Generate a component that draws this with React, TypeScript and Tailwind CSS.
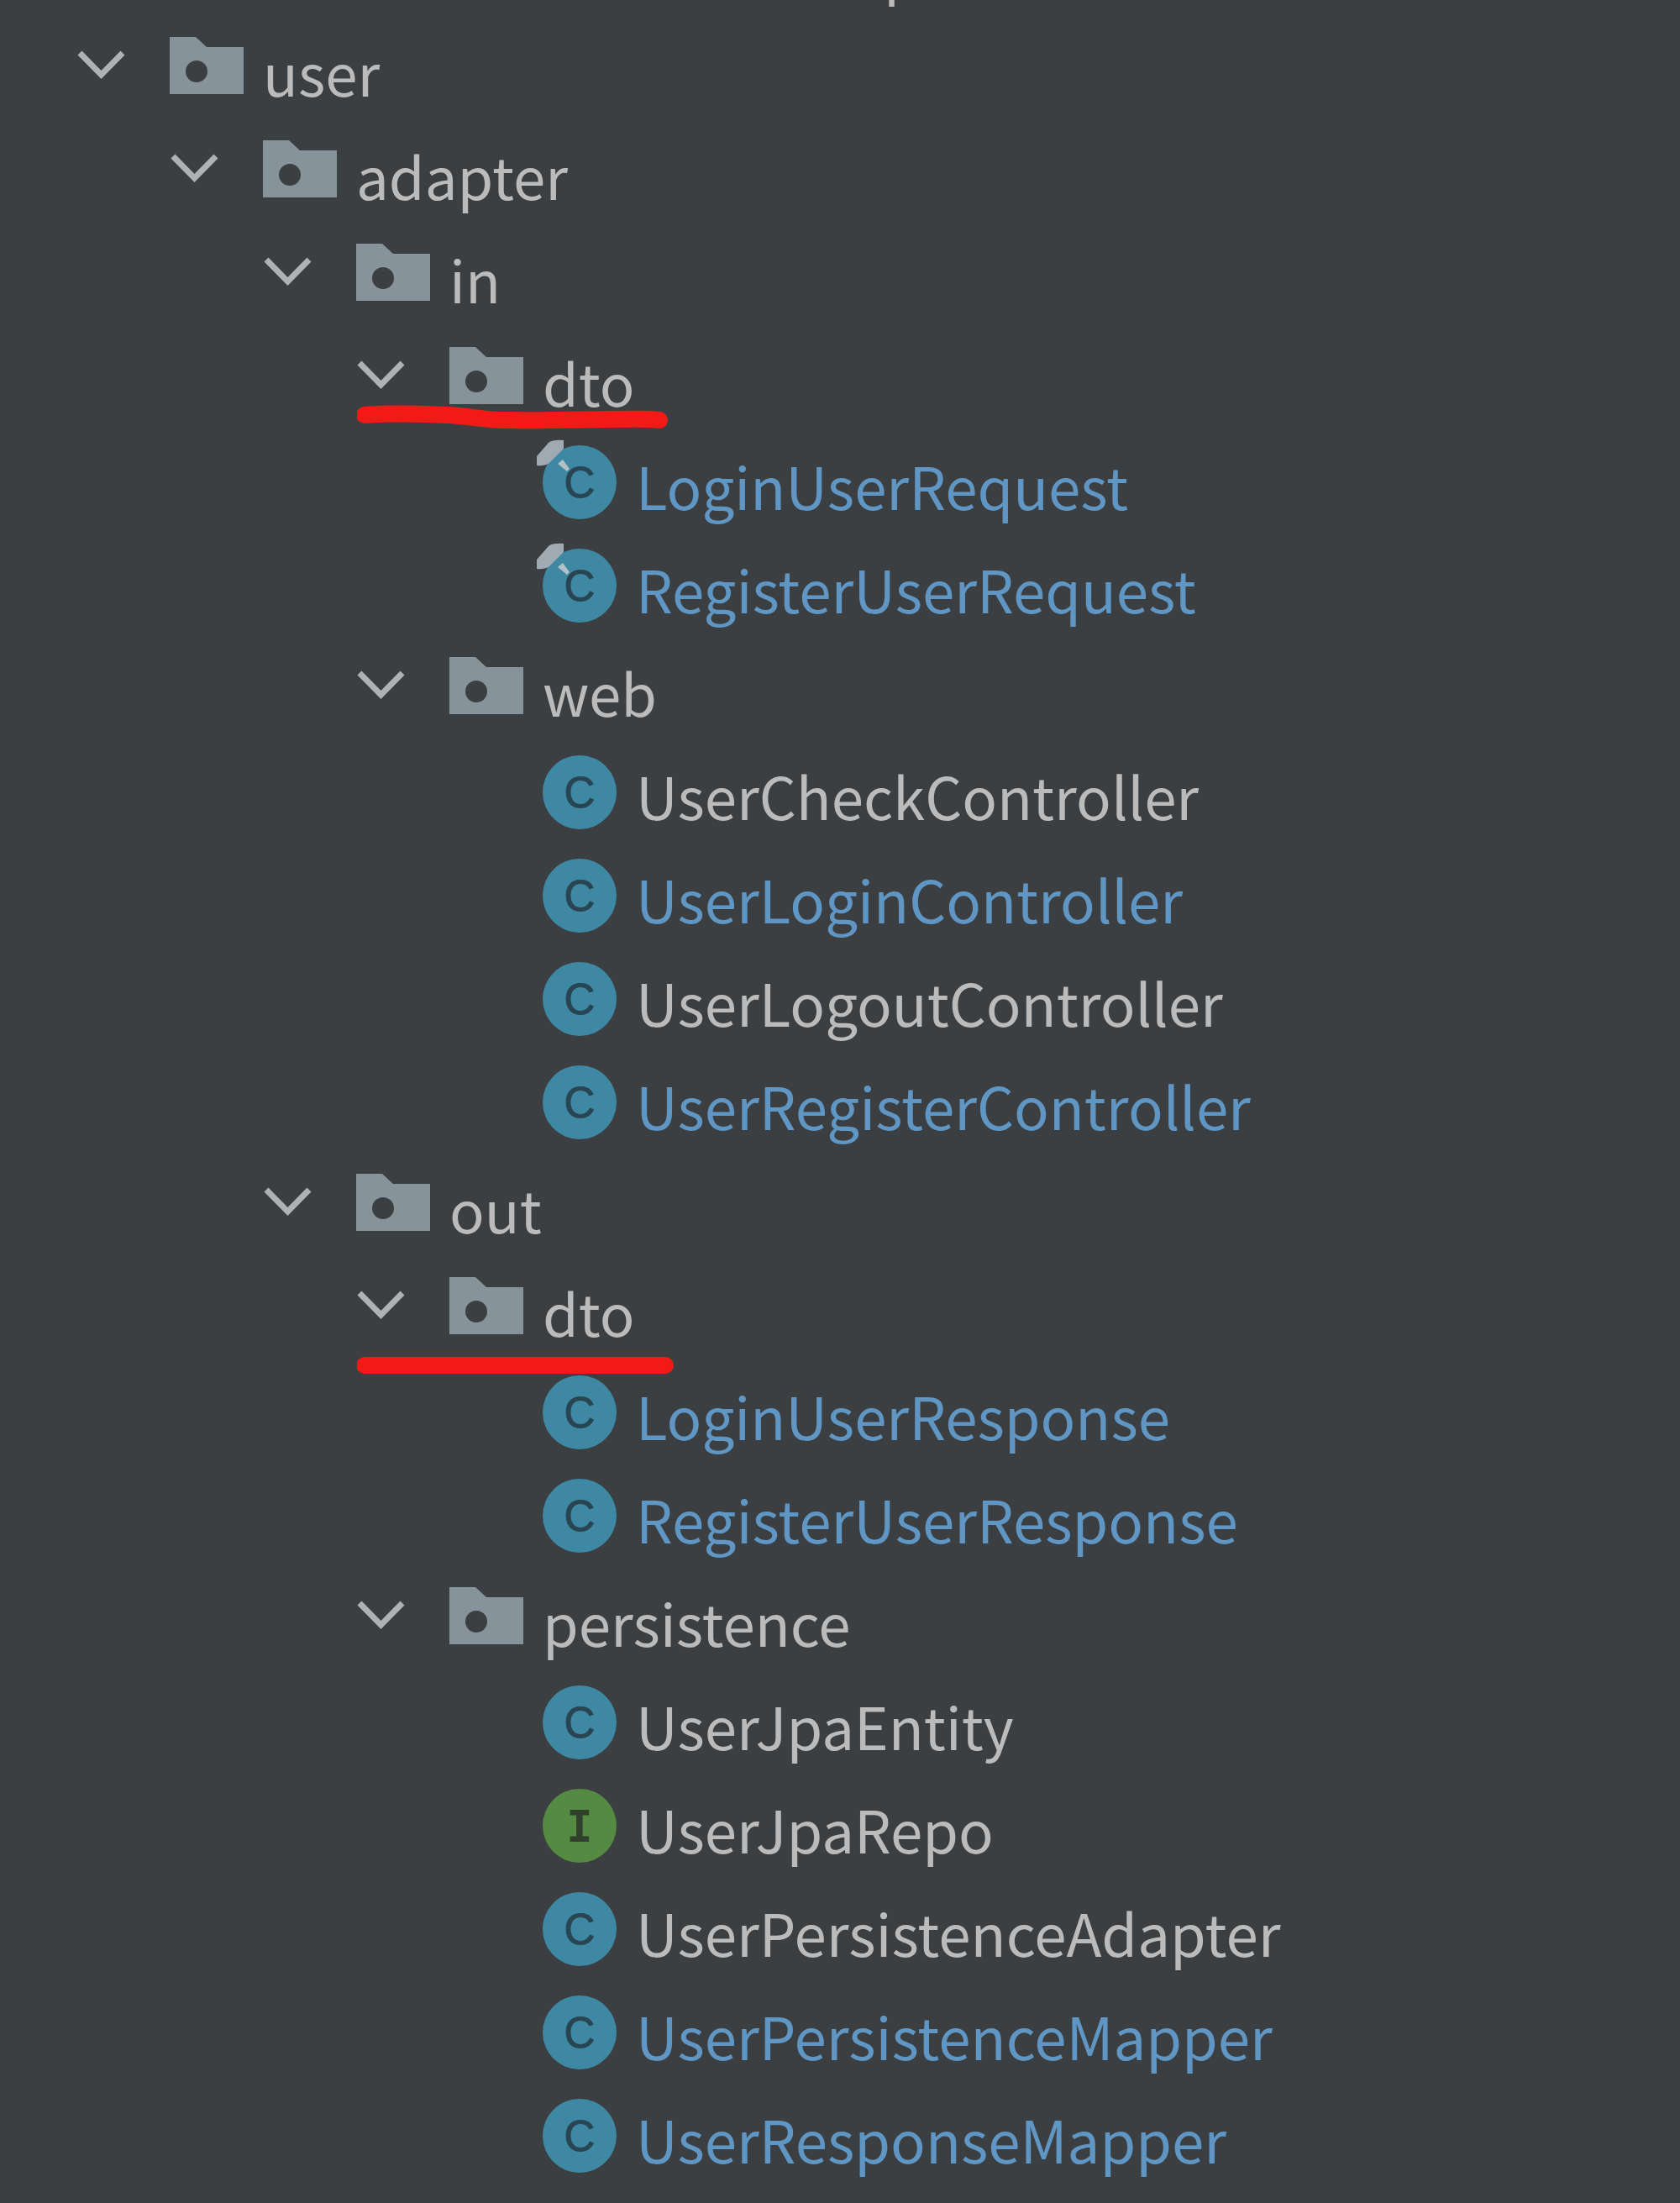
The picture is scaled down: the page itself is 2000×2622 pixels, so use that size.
import { useState } from "react";

type Kind = "folder" | "class" | "record" | "interface";

type TreeNode = {
  name: string;
  kind: Kind;
  changed?: boolean;
  mark?: string;
  children?: TreeNode[];
};

const tree: TreeNode[] = [
  {
    name: "user",
    kind: "folder",
    children: [
      {
        name: "adapter",
        kind: "folder",
        children: [
          {
            name: "in",
            kind: "folder",
            children: [
              {
                name: "dto",
                kind: "folder",
                mark: "M9 15C50 12 80 14 110 15C140 17 150 21 180 21C240 22 300 19 350 20L360 21",
                children: [
                  { name: "LoginUserRequest", kind: "record", changed: true },
                  { name: "RegisterUserRequest", kind: "record", changed: true },
                ],
              },
              {
                name: "web",
                kind: "folder",
                children: [
                  { name: "UserCheckController", kind: "class" },
                  { name: "UserLoginController", kind: "class", changed: true },
                  { name: "UserLogoutController", kind: "class" },
                  { name: "UserRegisterController", kind: "class", changed: true },
                ],
              },
            ],
          },
          {
            name: "out",
            kind: "folder",
            children: [
              {
                name: "dto",
                kind: "folder",
                mark: "M9 39H367",
                children: [
                  { name: "LoginUserResponse", kind: "class", changed: true },
                  { name: "RegisterUserResponse", kind: "class", changed: true },
                ],
              },
              {
                name: "persistence",
                kind: "folder",
                children: [
                  { name: "UserJpaEntity", kind: "class" },
                  { name: "UserJpaRepo", kind: "interface" },
                  { name: "UserPersistenceAdapter", kind: "class" },
                  { name: "UserPersistenceMapper", kind: "class", changed: true },
                  { name: "UserResponseMapper", kind: "class", changed: true },
                ],
              },
            ],
          },
        ],
      },
    ],
  },
];

function Chevron({ open }: { open: boolean }) {
  return (
    <svg viewBox="0 0 57 88" className={`h-[88px] w-[57px] ${open ? "" : "-rotate-90"}`} aria-hidden="true">
      <path d="M3 25L28.5 51L54 25" fill="none" stroke="#afb1b3" strokeWidth="7" />
    </svg>
  );
}

function NodeIcon({ kind }: { kind: Kind }) {
  if (kind === "folder") {
    return (
      <svg viewBox="0 0 88 88" className="size-[88px] shrink-0" aria-hidden="true">
        <path d="M0 6h31l13 12h44v56H0z" fill="#87939a" />
        <circle cx="32" cy="47" r="13" fill="#3c3f41" />
      </svg>
    );
  }

  return (
    <svg viewBox="0 0 88 88" className="size-[88px] shrink-0 overflow-visible" aria-hidden="true">
      <circle cx="44" cy="44" r="44" fill={kind === "interface" ? "#548a42" : "#3e88a4"} />
      {kind === "interface" ? (
        <text x="44" y="63" textAnchor="middle" fontSize="52" fill="#30402c" className="font-['DejaVu_Sans_Mono',monospace] font-bold">
          I
        </text>
      ) : (
        <text x="44" y="62" textAnchor="middle" fontSize="51" fill="#294552" stroke="#294552" strokeWidth="1" className="font-['Liberation_Sans',sans-serif]">
          C
        </text>
      )}
      {kind === "record" && (
        <>
          <path d="M-7 24V13L7 -3Q12 -7 25 -6V4L8 21Q2 25 -7 24z" fill="#9faab2" />
          <path d="M18 22L24 17L32 28L29 31z" fill="#b4c0c7" />
        </>
      )}
    </svg>
  );
}

function Label({ name, changed }: { name: string; changed?: boolean }) {
  return (
    <span
      className={`mt-2 font-['Noto_Sans_CJK_KR',sans-serif] text-[69px] leading-[123px] whitespace-nowrap ${
        changed ? "text-[#6096c4]" : "text-[#bbbbbb]"
      }`}
    >
      {name}
    </span>
  );
}

function Item({ node }: { node: TreeNode }) {
  const [open, setOpen] = useState(true);

  if (!node.children) {
    return (
      <li className="flex h-[123px] items-center gap-[23px] pl-[110px]">
        <NodeIcon kind={node.kind} />
        <Label name={node.name} changed={node.changed} />
      </li>
    );
  }

  return (
    <li>
      <div className="relative">
        <button
          type="button"
          aria-expanded={open}
          onClick={() => setOpen(!open)}
          className="flex h-[123px] items-center text-left"
        >
          <span className="w-[110px]">
            <Chevron open={open} />
          </span>
          <span className="flex items-center gap-[23px]">
            <NodeIcon kind={node.kind} />
            <Label name={node.name} changed={node.changed} />
          </span>
        </button>
        {node.mark && (
          <svg viewBox="0 0 380 50" className="pointer-events-none absolute top-[90px] left-0 z-10 h-[50px] w-[380px]" aria-hidden="true">
            <path d={node.mark} fill="none" stroke="#f11a17" strokeWidth="20" strokeLinecap="round" />
          </svg>
        )}
      </div>
      {open && (
        <ul className="pl-[111px]">
          {node.children.map((child) => (
            <Item key={child.name} node={child} />
          ))}
        </ul>
      )}
    </li>
  );
}

export default function App() {
  return (
    <main className="min-h-screen overflow-hidden bg-[#3c3f41]">
      {/* row that is scrolled out above the tree */}
      <div className="flex h-5 items-end overflow-hidden pl-[1052px]">
        <div className="flex h-[123px] items-center">
          <Label name="p" />
        </div>
      </div>
      <ul className="pl-[92px]">
        {tree.map((node) => (
          <Item key={node.name} node={node} />
        ))}
      </ul>
    </main>
  );
}
